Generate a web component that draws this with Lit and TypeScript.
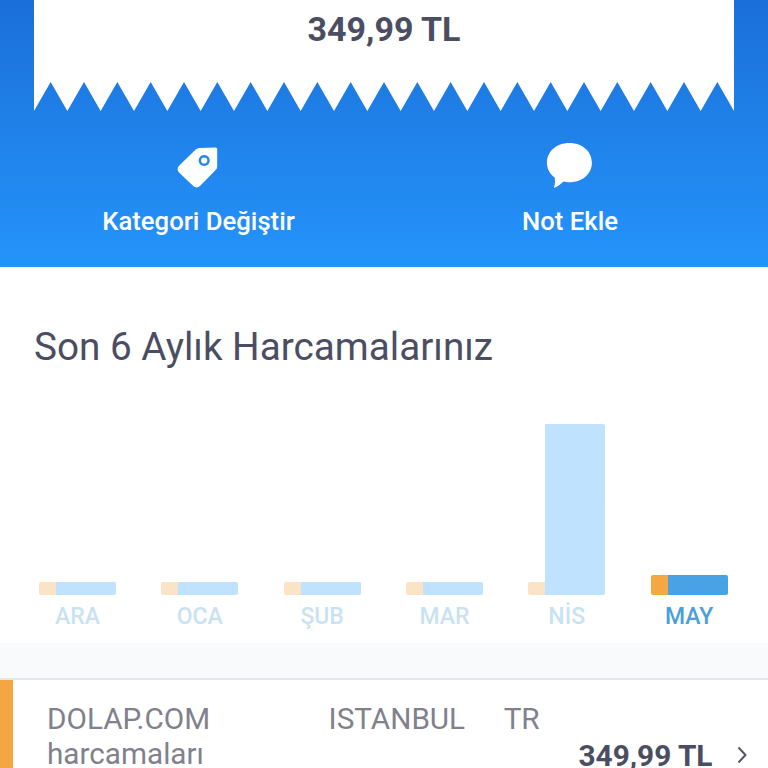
import {LitElement, html, css} from 'lit';
import {customElement, property} from 'lit/decorators.js';

interface Month {
  name: string;
  count: number;
  amount: number;
}

const MONTHS: Month[] = [
  {name: 'ARA', count: 13, amount: 13},
  {name: 'OCA', count: 13, amount: 13},
  {name: 'ŞUB', count: 13, amount: 13},
  {name: 'MAR', count: 13, amount: 13},
  {name: 'NİS', count: 13, amount: 171},
  {name: 'MAY', count: 20, amount: 20},
];

const TEETH = 21;

// White paper edge, one tooth is 20 units wide.
const zigzag = () => {
  let d = 'M0 0';
  for (let i = 0; i < TEETH; i++) {
    d += `L${i * 20} 30L${i * 20 + 10} 1`;
  }
  return d + `L${TEETH * 20} 30V0Z`;
};

@customElement('receipt-header')
class ReceiptHeader extends LitElement {
  static override styles = css`
    :host {
      display: block;
      height: 267px;
      box-sizing: border-box;
      padding: 0 34px;
      background: linear-gradient(#1b6fda, #1f80e8 45%, #2494fb);
    }

    .paper {
      height: 81px;
      background: white;
      color: #4b4e63;
      font-size: 34px;
      font-weight: 700;
      line-height: 40px;
      text-align: center;
      padding-top: 9px;
      box-sizing: border-box;
    }

    .edge {
      display: block;
      width: 100%;
      height: 30px;
    }

    .actions {
      display: grid;
      grid-template-columns: 329px 1fr;
      padding-top: 31px;
    }

    .action {
      display: flex;
      flex-direction: column;
      align-items: center;
      color: white;
      font-size: 25.7px;
      font-weight: 500;
      line-height: 30px;
    }

    .action:last-child {
      padding-left: 43px;
    }

    .action svg {
      width: 48px;
      height: 48px;
      margin-bottom: 16px;
    }
  `;

  override render() {
    return html`
      <div class="paper">349,99 TL</div>
      <svg class="edge" viewBox="0 0 420 30" preserveAspectRatio="none">
        <path d=${zigzag()} fill="#fff" />
      </svg>
      <div class="actions">
        <div class="action">
          <svg viewBox="0.8 0 48 48">
            <path
              fill="#fff"
              fill-rule="evenodd"
              d="M21.500 7.500Q23.200 6 25.500 6L41.500 5.600Q43 5.600 43 7.200V24.500Q43 26.500 41.500 28L26 43.800Q22.300 47.200 18.800 43.800L4.800 30.500Q2 27.200 4.800 23.800ZM30 13a5.500 5.500 0 1 0 .01 0Z"
            />
            <circle cx="30" cy="18.500" r="3.100" fill="#fff" />
          </svg>
          <span>Kategori Değiştir</span>
        </div>
        <div class="action">
          <svg viewBox="0.6 -1.1 48 48">
            <path
              fill="#fff"
              d="M24 0C37 0 46.500 8.500 46.500 19.700S37 39.200 24 39.200C21.500 39.200 20 38.900 18 38.500C15 41.500 12.500 43.500 8.600 44.800C9.600 41 9.800 38 9.300 34.500C4.500 31 1.500 25.700 1.500 19.700C1.500 8.500 11 0 24 0Z"
            />
          </svg>
          <span>Not Ekle</span>
        </div>
      </div>
    `;
  }
}

@customElement('spending-chart')
class SpendingChart extends LitElement {
  static override styles = css`
    :host {
      display: block;
      height: 376px;
      box-sizing: border-box;
      padding: 57px 40.4px 0 34px;
    }

    .title {
      margin: 0;
      color: #4b4e63;
      font-size: 38.7px;
      font-weight: 400;
      line-height: 46px;
      white-space: nowrap;
    }

    .months {
      display: flex;
      justify-content: space-between;
      padding: 54px 0 0 5px;
    }

    .month {
      display: flex;
      flex-direction: column;
      width: 77px;
      opacity: 0.3;
    }

    .month--active {
      opacity: 1;
    }

    .bars {
      display: flex;
      align-items: flex-end;
      height: 171px;
    }

    .bar {
      width: 17px;
      border-radius: 2px 0 0 2px;
      background: #f5a742;
    }

    .bar--amount {
      width: 60px;
      border-radius: 0 2px 2px 0;
      background: #2aa2ff;
    }

    .month--active .bar--amount {
      background: #49a2e6;
    }

    .name {
      color: #4b9fda;
      font-size: 23px;
      font-weight: 500;
      line-height: 28px;
      margin-top: 8px;
      text-align: center;
    }
  `;

  @property({attribute: false})
  months: Month[] = [];

  override render() {
    return html`
      <h2 class="title">Son 6 Aylık Harcamalarınız</h2>
      <div class="months">
        ${this.months.map(
          (month, i) => html`
            <div
              class="month ${i === this.months.length - 1
                ? 'month--active'
                : ''}"
            >
              <div class="bars">
                <div class="bar" style="height: ${month.count}px"></div>
                <div
                  class="bar bar--amount"
                  style="height: ${month.amount}px"
                ></div>
              </div>
              <span class="name">${month.name}</span>
            </div>
          `
        )}
      </div>
    `;
  }
}

@customElement('spending-row')
class SpendingRow extends LitElement {
  static override styles = css`
    :host {
      display: flex;
      height: 88px;
      box-sizing: border-box;
      border-left: 13px solid #f3a642;
      padding: 21px 21px 0 34px;
    }

    .details {
      flex: 1;
      color: #80818c;
      font-size: 29.7px;
      line-height: 35px;
      white-space: nowrap;
    }

    .place {
      display: flex;
    }

    .city {
      margin: 0 38.5px 0 118.5px;
    }

    .amount {
      color: #4b4e63;
      font-size: 29.8px;
      font-weight: 700;
      line-height: 35px;
      padding-top: 37px;
      white-space: nowrap;
    }

    .arrow {
      width: 10px;
      height: 18px;
      margin: 45px 0 0 24.5px;
    }
  `;

  @property()
  merchant = '';

  @property()
  city = '';

  @property()
  country = '';

  @property()
  amount = '';

  override render() {
    return html`
      <div class="details">
        <div class="place">
          <span>${this.merchant}</span>
          <span class="city">${this.city}</span>
          <span>${this.country}</span>
        </div>
        <div>harcamaları</div>
      </div>
      <div class="amount">${this.amount}</div>
      <svg class="arrow" viewBox="0 0 10 18">
        <path
          d="M1.500 1.500L8.500 9L1.500 16.500"
          fill="none"
          stroke="#55566a"
          stroke-width="2"
        />
      </svg>
    `;
  }
}

@customElement('app-root')
class AppRoot extends LitElement {
  static override styles = css`
    :host {
      display: block;
      width: 768px;
      height: 768px;
      overflow: hidden;
      background: white;
      font-family: Roboto, sans-serif;
    }

    .divider {
      height: 37px;
      box-sizing: border-box;
      background: #f9fafc;
      border-bottom: 2px solid #e5e7eb;
    }
  `;

  override render() {
    return html`
      <receipt-header></receipt-header>
      <spending-chart .months=${MONTHS}></spending-chart>
      <div class="divider"></div>
      <spending-row
        merchant="DOLAP.COM"
        city="ISTANBUL"
        country="TR"
        amount="349,99 TL"
      ></spending-row>
    `;
  }
}

declare global {
  interface HTMLElementTagNameMap {
    'receipt-header': ReceiptHeader;
    'spending-chart': SpendingChart;
    'spending-row': SpendingRow;
    'app-root': AppRoot;
  }
}
